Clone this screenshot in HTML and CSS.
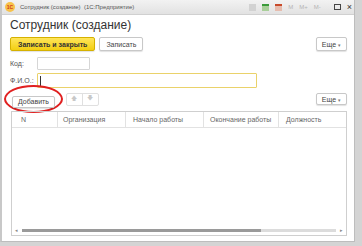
FILE: index.html
```html
<!DOCTYPE html>
<html lang="ru">
<head>
	<meta charset="UTF-8">
	<title>Сотрудник (создание)</title>
	<link rel="stylesheet" href="styles.css">
</head>
<body>
	<div class="window">
		<div class="titlebar">
			<span class="app-icon">1С</span>
			<span class="title-text">Сотрудник (создание)&nbsp; (1С:Предприятие)</span>
			<div class="title-tools">
				<span class="tool tool-print"></span>
				<span class="tool tool-green"></span>
				<span class="tool tool-red"></span>
				<span class="tool-m">M</span>
				<span class="tool-m">M+</span>
				<span class="tool-m">M-</span>
				<span class="tool-max"></span>
				<span class="tool-close">×</span>
			</div>
		</div>

		<div class="form">
			<h1>Сотрудник (создание)</h1>

			<div class="toolbar">
				<button class="btn btn-main">Записать и закрыть</button>
				<button class="btn">Записать</button>
				<span class="spacer"></span>
				<button class="btn btn-more">Еще <span class="caret">▾</span></button>
			</div>

			<div class="field field-code">
				<label>Код:</label>
				<div class="input input-code"></div>
			</div>
			<div class="field">
				<label>Ф.И.О.:</label>
				<div class="input input-fio"><span class="cursor"></span></div>
			</div>

			<div class="toolbar table-bar">
				<span class="marked">
					<button class="btn btn-small">Добавить</button>
				</span>
				<span class="arrows">
					<span class="arrow">🡅</span>
					<span class="arrow">🡇</span>
				</span>
				<span class="spacer"></span>
				<button class="btn btn-more btn-small">Еще <span class="caret">▾</span></button>
			</div>

			<div class="table">
				<div class="thead">
					<div class="th th-n">N</div>
					<div class="th th-org">Организация</div>
					<div class="th th-start">Начало работы</div>
					<div class="th th-end">Окончание работы</div>
					<div class="th th-pos">Должность</div>
				</div>
				<div class="tbody"></div>
				<div class="hscroll">
					<span class="sarrow">◂</span>
					<div class="track"><div class="thumb"></div></div>
					<span class="sarrow">▸</span>
				</div>
			</div>
		</div>
	</div>
</body>
</html>
```

FILE: styles.css
```css
body {
	margin: 0;
	padding: 0;
	background: #d4d4d4;
	font-family: Arial, 'Liberation Sans', sans-serif;
	width: 362px;
	height: 246px;
	overflow: hidden;
}

.window {
	width: 355px;
	height: 242px;
	background: #fff;
	border-left: 2px solid #c8c8c8;
	border-right: 1px solid #bdbdbd;
	border-bottom: 1px solid #bdbdbd;
	box-sizing: border-box;
	display: flex;
	flex-direction: column;
}

.titlebar {
	height: 14px;
	background: linear-gradient(#f2f2f2, #e2e2e2);
	border-bottom: 1px solid #d0d0d0;
	display: flex;
	align-items: center;
	padding-left: 3px;
	font-size: 6px;
	color: #555;
}

.app-icon {
	width: 10px;
	height: 10px;
	border-radius: 50%;
	background: #f7c24a;
	color: #d23a1a;
	font-size: 5px;
	font-weight: bold;
	display: flex;
	align-items: center;
	justify-content: center;
	margin-right: 5px;
}

.title-text {
	flex: 1;
}

.title-tools {
	display: flex;
	align-items: center;
	gap: 6px;
	padding-right: 2px;
}

.tool {
	width: 7px;
	height: 7px;
}
.tool-print { background: #d2d2d2; }
.tool-green { background: #a9cf9a; border-top: 2px solid #3a9a3a; height: 5px; }
.tool-red { background: #e6bcae; border-top: 2px solid #c84a2a; height: 5px; }

.tool-m {
	color: #b5b5b5;
	font-size: 6px;
}

.tool-max {
	width: 7px;
	height: 6px;
	border: 1px solid #444;
	box-sizing: border-box;
	margin-left: 7px;
}

.tool-close {
	font-size: 9px;
	color: #333;
	line-height: 8px;
}

.form {
	flex: 1;
	padding: 0 7px 0 8px;
	display: flex;
	flex-direction: column;
	min-height: 0;
}

h1 {
	font-size: 12px;
	font-weight: normal;
	color: #333;
	margin: 2px 0 0 0;
	height: 17px;
	line-height: 17px;
}

.toolbar {
	display: flex;
	align-items: center;
	gap: 4px;
	margin-top: 3px;
}

.spacer {
	flex: 1;
}

.btn {
	font-family: inherit;
	font-size: 7px;
	color: #444;
	background: #fff;
	border: 1px solid #c8c8c8;
	border-radius: 2px;
	height: 14px;
	padding: 0 6px;
	box-shadow: 0 1px 1px rgba(0, 0, 0, 0.12);
}

.btn-main {
	background: linear-gradient(#ffe55a, #f3cf12);
	border-color: #d5b100;
	color: #333;
	font-weight: bold;
	padding: 0 7px;
}

.btn-more {
	padding: 0 5px;
}

.caret {
	font-size: 5px;
	color: #777;
}

.field {
	display: flex;
	align-items: center;
	margin-top: 3px;
	font-size: 7px;
	color: #555;
}

.field-code {
	margin-top: 6px;
}

.field label {
	width: 27px;
}

.input {
	height: 13px;
	border: 1px solid #d6d6d6;
	box-sizing: border-box;
	border-radius: 1px;
}

.input-code {
	width: 53px;
}

.input-fio {
	width: 220px;
	border: 1px solid #ead26a;
	height: 15px;
	display: flex;
	align-items: center;
	padding-left: 2px;
}

.cursor {
	width: 1px;
	height: 10px;
	background: #333;
}

.table-bar {
	margin-top: 2px;
	gap: 0;
}

.btn-small {
	height: 12px;
	font-size: 7px;
	padding: 0 5px;
}

.marked {
	border: 2px solid #e02020;
	border-radius: 50%;
	padding: 3px 6px;
	margin: -5px 0 -5px -6px;
}

.arrows {
	display: flex;
	margin-left: 3px;
	border: 1px solid #e0e0e0;
	border-radius: 2px;
	height: 11px;
}

.arrow {
	width: 15px;
	font-size: 6px;
	color: #c8c8c8;
	display: flex;
	align-items: center;
	justify-content: center;
}

.arrow + .arrow {
	border-left: 1px solid #e0e0e0;
}

.table {
	flex: 1;
	margin: 3px 0 5px 1px;
	border: 1px solid #cfcfcf;
	display: flex;
	flex-direction: column;
	min-height: 0;
}

.thead {
	display: flex;
	height: 15px;
	border-bottom: 1px solid #e2e2e2;
	font-size: 7px;
	color: #666;
}

.th {
	display: flex;
	align-items: center;
	padding-left: 7px;
	border-right: 1px solid #e2e2e2;
	box-sizing: border-box;
}

.th-n { width: 46px; padding-left: 9px; }
.th-org { width: 68px; padding-left: 5px; }
.th-start { width: 78px; }
.th-end { width: 75px; padding-left: 6px; }
.th-pos { flex: 1; border-right: none; }

.tbody {
	flex: 1;
}

.hscroll {
	display: flex;
	align-items: center;
	height: 8px;
	padding: 0 3px 1px;
	gap: 4px;
}

.sarrow {
	font-size: 5px;
	color: #888;
}

.track {
	flex: 1;
	height: 3px;
	background: #dcdcdc;
}

.thumb {
	width: 76%;
	height: 100%;
	background: #9a9a9a;
}
```
